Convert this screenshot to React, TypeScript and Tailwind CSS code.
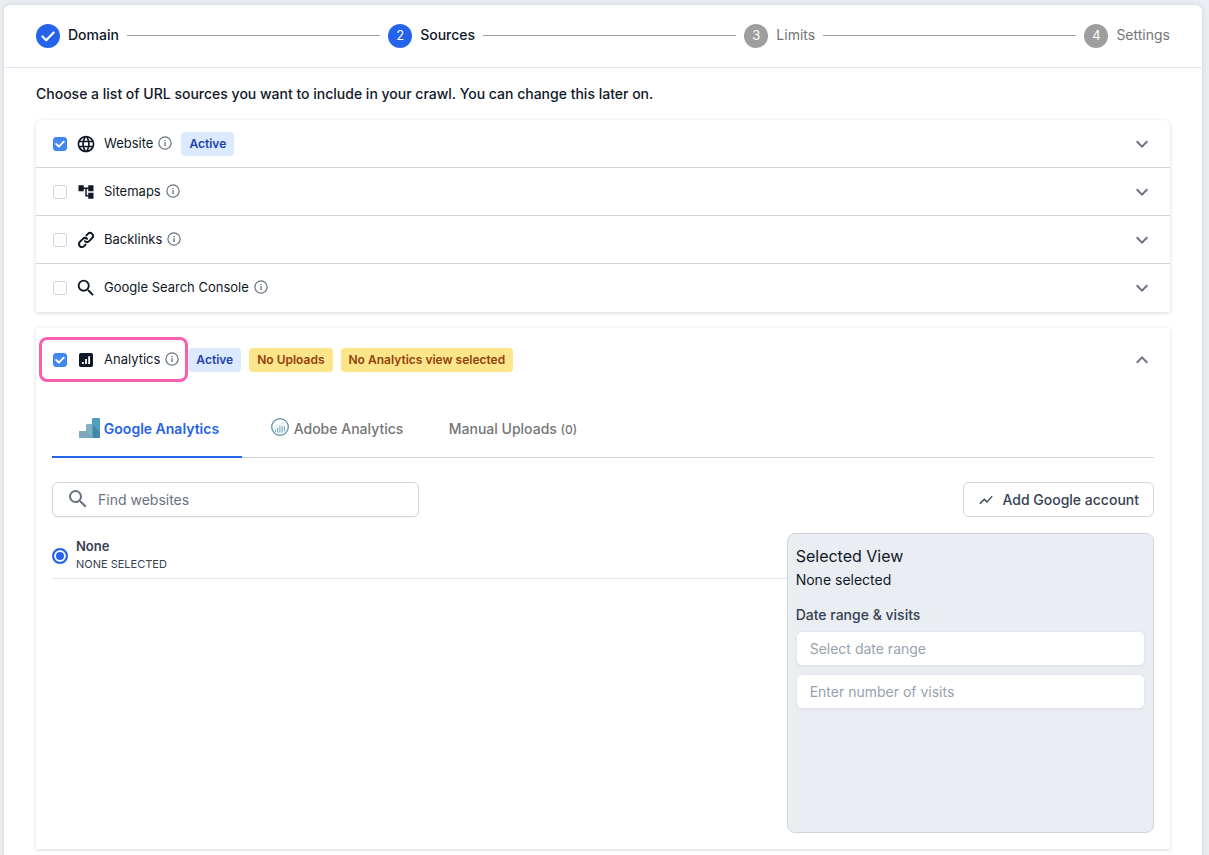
import { HiLink } from "react-icons/hi";
import { MdAccountTree, MdExpandLess, MdExpandMore, MdLanguage, MdSearch, MdShowChart } from "react-icons/md";
import { Fragment } from "react";
import type { ReactNode } from "react";

const steps = [
  { label: "Domain", state: "done" },
  { label: "Sources", state: "current" },
  { label: "Limits", state: "todo" },
  { label: "Settings", state: "todo" },
];

const sources = [
  { id: "website", label: "Website", icon: <MdLanguage className="size-5 shrink-0" />, checked: true },
  { id: "sitemaps", label: "Sitemaps", icon: <MdAccountTree className="size-[18px] shrink-0" />, checked: false },
  { id: "backlinks", label: "Backlinks", icon: <HiLink className="size-5 shrink-0" />, checked: false },
  { id: "gsc", label: "Google Search Console", icon: <MdSearch className="size-[22px] shrink-0" />, checked: false },
];

function InfoIcon() {
  return (
    <svg viewBox="0 0 14 14" className="mb-0.5 size-[14px] shrink-0 text-gray-500" fill="none" stroke="currentColor" aria-hidden="true">
      <circle cx="7" cy="7" r="6.1" strokeWidth="1.2" />
      <path d="M7 6.3v3.6M7 4v1.2" strokeWidth="1.4" />
    </svg>
  );
}

function StepCheckIcon() {
  return (
    <svg viewBox="0 0 18 18" className="size-[18px]" fill="none" stroke="#fff" strokeWidth="2.2" aria-hidden="true">
      <path d="M3.5 9.5l3.700 3.700 7.500-7.700" strokeLinecap="round" strokeLinejoin="round" />
    </svg>
  );
}

function AnalyticsIcon() {
  return (
    <svg viewBox="0 0 14 14" className="size-[14px]" aria-hidden="true">
      <rect width="14" height="14" rx="1.8" fill="#111827" />
      <path d="M3 9h1.800v2H3zM6.100 6h1.800v5H6.100zM9.200 3.200H11V11H9.200z" fill="#fff" />
    </svg>
  );
}

function GoogleAnalyticsIcon() {
  return (
    <svg viewBox="0 0 21 20" className="mb-0.5 h-5 w-[21px]" aria-hidden="true">
      <path d="M1.3 13H7V7.3Q7 6 8.3 6H14v14H1.3Q0 20 0 18.7v-4.4Q0 13 1.3 13z" fill="#86b0c1" />
      <path d="M7 13l7 7H1.3Q0 20 0 18.7v-4.4Q0 13 1.3 13z" fill="#7da8ba" />
      <path d="M13 1.2Q13 0 14.2 0h5.6Q21 0 21 1.2v17.600q0 1.200-1.200 1.200H13z" fill="#529fbf" />
      <path d="M14 7l7 7v4.8q0 1.200-1.200 1.200H14z" fill="#4388a6" />
    </svg>
  );
}

function AdobeAnalyticsIcon() {
  return (
    <svg viewBox="0 0 18 18" className="mb-1 size-[18px]" fill="none" aria-hidden="true">
      <circle cx="9" cy="9" r="8.3" stroke="#4b8ba3" strokeWidth="1.2" />
      <path d="M4.5 14v-2.500M6.700 14.500V9.800M8.900 15V8.500M11.100 14.500V7.800M13.300 13.500V8" stroke="#6fa9c2" strokeWidth="1.1" />
      <path d="M3.500 9.800L6.500 7.200l2.400.3 2.800-2.300 2.500.3" stroke="#8fbccd" strokeWidth=".8" strokeDasharray="1 .8" />
    </svg>
  );
}

function Badge({ tone, children }: { tone: "blue" | "amber"; children: ReactNode }) {
  const color = tone === "blue" ? "bg-[#dbeafe] text-[#1e40af]" : "bg-[#fde68a] text-[#92400e]";
  return <span className={`rounded px-2 text-xs leading-6 font-semibold ${color}`}>{children}</span>;
}

function Checkbox({ id, checked }: { id: string; checked: boolean }) {
  return (
    <span className="grid size-[14px] shrink-0">
      <input
        id={id}
        type="checkbox"
        defaultChecked={checked}
        className="peer col-start-1 row-start-1 size-[14px] appearance-none rounded-[3px] border border-gray-300 bg-white checked:border-[#3b82f6] checked:bg-[#4388f7]"
      />
      <svg viewBox="0 0 14 14" className="pointer-events-none col-start-1 row-start-1 hidden size-[14px] peer-checked:block" fill="none" stroke="#fff" strokeWidth="1.8" aria-hidden="true">
        <path d="M3.2 7l2.600 2.600 5-5" strokeLinecap="round" strokeLinejoin="round" />
      </svg>
    </span>
  );
}

function Stepper() {
  return (
    <ol className="flex items-center gap-2 border-b border-gray-200 px-8 py-[19px]">
      {steps.map((step, i) => (
        <Fragment key={step.label}>
          {i > 0 && <li role="presentation" className="mb-0.5 h-px flex-1 bg-[#9a9ba3]" />}
          <li className="flex items-center gap-2">
            <span className={`flex size-6 items-center justify-center rounded-full text-[13px] text-white ${step.state === "todo" ? "bg-[#9e9e9e]" : "bg-[#2563eb]"}`}>
              {step.state === "done" ? <StepCheckIcon /> : i + 1}
            </span>
            <span className={`mb-0.5 text-sm ${step.state === "todo" ? "text-[#757575]" : "font-medium text-gray-900"}`}>{step.label}</span>
          </li>
        </Fragment>
      ))}
    </ol>
  );
}

function SourceList() {
  return (
    <div className="mt-4 rounded-t-md bg-white shadow-[0_1px_4px_rgba(0,0,0,0.16)]">
      {sources.map((source) => (
        <div key={source.id} className="flex h-12 items-center border-b border-gray-300 pr-4 pl-[17px] last:border-b-0">
          <Checkbox id={source.id} checked={source.checked} />
          <span className="ml-2 flex w-[22px] justify-center">{source.icon}</span>
          <label htmlFor={source.id} className="mr-[5px] ml-[7px] text-[13px]">{source.label}</label>
          <InfoIcon />
          {source.checked && (
            <span className="ml-[9px] flex">
              <Badge tone="blue">Active</Badge>
            </span>
          )}
          <button type="button" aria-label={`Expand ${source.label}`} className="ml-auto text-gray-500">
            <MdExpandMore className="size-6" />
          </button>
        </div>
      ))}
    </div>
  );
}

function Tabs() {
  return (
    <div role="tablist" className="mt-[18px] flex h-[58px] items-center border-b border-gray-300 text-sm font-medium text-[#757575]">
      <button type="button" role="tab" aria-selected="true" className="flex h-[58px] w-[190px] items-center justify-center gap-1 self-start border-b-2 border-[#2563eb] pt-px pl-1 font-semibold text-[#2563eb]">
        <GoogleAnalyticsIcon />
        Google Analytics
      </button>
      <button type="button" role="tab" aria-selected="false" className="flex w-[190px] items-center justify-center gap-[5px]">
        <AdobeAnalyticsIcon />
        Adobe Analytics
      </button>
      <button type="button" role="tab" aria-selected="false" className="w-[162px]">
        Manual Uploads <span className="text-xs">(0)</span>
      </button>
    </div>
  );
}

function SelectedView() {
  return (
    <aside className="flex h-[300px] w-1/3 flex-col rounded-lg border border-gray-300 bg-[#eaedf2] px-2 pt-2">
      <h2 className="text-base leading-7">Selected View</h2>
      <p className="text-sm leading-5">None selected</p>
      <h3 className="mt-[15px] text-sm leading-5 font-medium text-gray-700">Date range &amp; visits</h3>
      <input aria-label="Date range" placeholder="Select date range" className="mt-[6px] h-[35px] rounded-md border border-gray-200 bg-white px-[13px] text-sm shadow-xs placeholder:text-gray-400" />
      <input aria-label="Number of visits" placeholder="Enter number of visits" className="mt-2 h-[35px] rounded-md border border-gray-200 bg-white px-[13px] text-sm shadow-xs placeholder:text-gray-400" />
    </aside>
  );
}

function AnalyticsPanel() {
  return (
    <section className="mt-4 bg-white px-4 pt-[9px] pb-4 shadow-[0_1px_4px_rgba(0,0,0,0.16)]">
      <div className="flex items-center">
        <div className="-ml-[13px] flex h-[45px] items-center rounded-lg border-[3px] border-[#f95fae] pr-[6px] pl-[11px]">
          <Checkbox id="analytics" checked />
          <span className="ml-2 flex w-[22px] justify-center">
            <AnalyticsIcon />
          </span>
          <label htmlFor="analytics" className="mr-[5px] ml-[7px] text-[13px]">Analytics</label>
          <InfoIcon />
        </div>
        <div className="flex gap-2">
          <Badge tone="blue">Active</Badge>
          <Badge tone="amber">No Uploads</Badge>
          <Badge tone="amber">No Analytics view selected</Badge>
        </div>
        <button type="button" aria-label="Collapse Analytics" className="ml-auto text-gray-500">
          <MdExpandLess className="size-6" />
        </button>
      </div>

      <Tabs />

      <div className="mt-6 flex justify-between">
        <div className="flex h-[35px] w-1/3 items-center rounded-md border border-gray-300 pl-[13px] shadow-xs">
          <MdSearch className="mb-0.5 size-6 shrink-0 text-gray-500" />
          <input type="search" aria-label="Find websites" placeholder="Find websites" className="ml-2 w-full min-w-0 text-sm outline-none placeholder:text-gray-500" />
        </div>
        <button type="button" className="flex h-[35px] items-center gap-2 rounded-md border border-gray-300 px-[14px] text-sm font-medium text-gray-700">
          <MdShowChart className="size-4" />
          Add Google account
        </button>
      </div>

      <div className="mt-4 flex">
        <div className="flex-1">
          <label className="flex items-center gap-2 border-b border-gray-200 pt-[5px] pb-[5px]">
            <input type="radio" name="view" defaultChecked className="size-4 appearance-none rounded-full border-2 border-[#2563eb] bg-[#2563eb] shadow-[inset_0_0_0_2px_#fff]" />
            <span className="flex flex-col text-gray-700">
              <span className="text-[13px] leading-[17px] font-semibold">None</span>
              <span className="text-[11px] leading-[18px]">NONE SELECTED</span>
            </span>
          </label>
        </div>
        <SelectedView />
      </div>
    </section>
  );
}

export default function App() {
  return (
    <div className="bg-[#eaedf2] pt-[5px] pr-[7px] pl-1 font-['Inter',sans-serif] text-gray-900">
      <main className="min-h-screen rounded-md bg-white pb-8 shadow-[0_0_5px_rgba(0,0,0,0.12)]">
        <Stepper />
        <div className="px-8 pt-4">
          <h1 className="text-sm font-medium">Choose a list of URL sources you want to include in your crawl. You can change this later on.</h1>
          <SourceList />
          <AnalyticsPanel />
        </div>
      </main>
    </div>
  );
}
